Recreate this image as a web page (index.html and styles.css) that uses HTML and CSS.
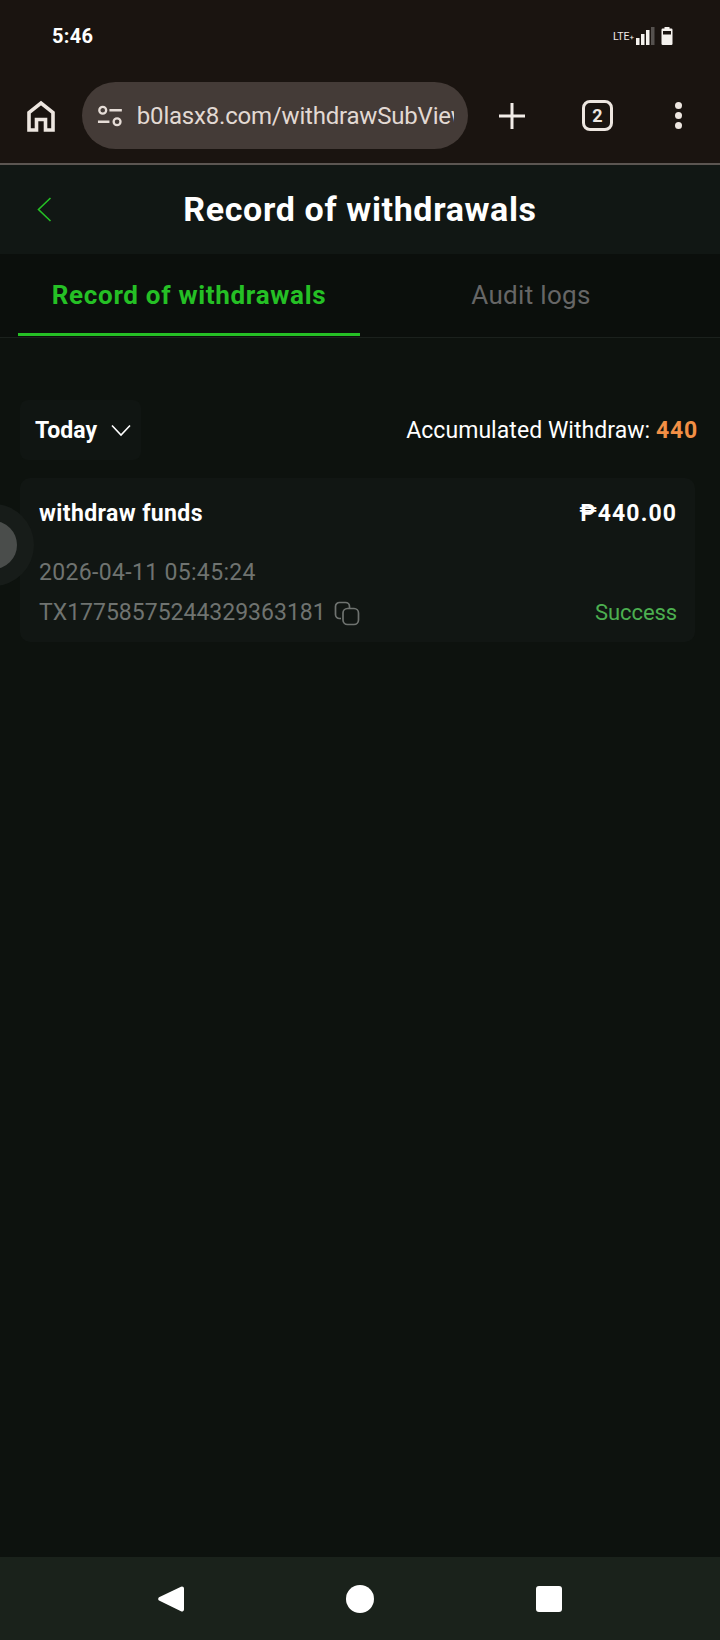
FILE: index.html
```html
<!DOCTYPE html>
<html lang="en">
<head>
    <meta charset="UTF-8">
    <meta name="viewport" content="width=device-width, initial-scale=1.0">
    <title>Record of withdrawals</title>
    <link rel="stylesheet" href="styles.css">
</head>
<body>
    <div class="phone">
        <div class="status-bar">
            <span class="clock">5:46</span>
            <div class="status-icons">
                <span class="lte">LTE<small>+</small></span>
                <svg class="signal" width="20" height="18" viewBox="0 0 20 18">
                    <rect x="0" y="11" width="3.5" height="7" fill="#f5f2ee"/>
                    <rect x="5" y="7" width="3.5" height="11" fill="#f5f2ee"/>
                    <rect x="10" y="3" width="3.5" height="15" fill="#f5f2ee"/>
                    <rect x="15" y="0" width="3.5" height="18" fill="#55514e"/>
                </svg>
                <svg class="battery" width="12" height="18" viewBox="0 0 12 18">
                    <rect x="3.5" y="0" width="5" height="2" fill="#f5f2ee"/>
                    <rect x="0.5" y="1.5" width="11" height="16.5" rx="1.2" fill="#f5f2ee"/>
                    <rect x="2" y="4" width="8" height="3.5" fill="#1a1410"/>
                </svg>
            </div>
        </div>

        <div class="browser-bar">
            <svg class="home-icon" width="30" height="32" viewBox="0 0 30 32" fill="none" stroke="#ede6e0" stroke-width="3.6">
                <path d="M3 30V12.500L15 3l12 9.500V30h-7.500V19.500h-9V30z"/>
            </svg>
            <div class="url-pill">
                <svg width="27" height="22" viewBox="0 0 27 22" fill="none" stroke="#e6ddd7" stroke-width="2.4">
                    <circle cx="6" cy="5" r="3.6"/>
                    <path d="M13 5h13M1 17h12"/>
                    <circle cx="21" cy="17" r="3.6"/>
                </svg>
                <span class="url-text">b0lasx8.com/withdrawSubView</span>
            </div>
            <svg class="plus-icon" width="28" height="28" viewBox="0 0 28 28" stroke="#f2ece7" stroke-width="3">
                <path d="M14 1v26M1 14h26"/>
            </svg>
            <div class="tab-count">2</div>
            <div class="dots"><i></i><i></i><i></i></div>
        </div>

        <div class="page-header">
            <svg class="back-icon" width="15" height="25" viewBox="0 0 15 25" fill="none" stroke="#25c025" stroke-width="1.6">
                <path d="M13.5 1 1.5 12.5 13.5 24"/>
            </svg>
            <h1>Record of withdrawals</h1>
        </div>

        <div class="tabs">
            <div class="tab active">Record of withdrawals</div>
            <div class="tab">Audit logs</div>
        </div>

        <main class="content">
            <div class="filter-row">
                <div class="date-select">
                    <span>Today</span>
                    <svg width="20" height="13" viewBox="0 0 20 13" fill="none" stroke="#fff" stroke-width="1.6">
                        <path d="M1 1.5 10 11l9-9.5"/>
                    </svg>
                </div>
                <div class="total">Accumulated Withdraw: <b>440</b></div>
            </div>

            <div class="record-card">
                <div class="record-top">
                    <span class="record-name">withdraw funds</span>
                    <span class="record-amount">₱440.00</span>
                </div>
                <div class="record-date">2026-04-11 05:45:24</div>
                <div class="record-bottom">
                    <div class="record-id">
                        <span>TX17758575244329363181</span>
                        <svg width="26" height="25" viewBox="0 0 26 25" fill="none" stroke="#6f7370" stroke-width="1.7">
                            <path d="M7 17.5H5.5A4 4 0 0 1 1.5 13.500V5.500a4 4 0 0 1 4-4h6a4 4 0 0 1 4 4V7"/>
                            <rect x="9" y="7.500" width="15.500" height="16" rx="4.500"/>
                        </svg>
                    </div>
                    <span class="record-status">Success</span>
                </div>
            </div>
        </main>

        <div class="float-ball"><i></i></div>

        <div class="nav-bar">
            <svg width="28" height="28" viewBox="0 0 28 28"><path d="M25 1.500a2 2 0 0 1 2 2v21a2 2 0 0 1-3 1.700L2 15.500a2 2 0 0 1 0-3.200L24 1.800z" fill="#fff"/></svg>
            <div class="nav-circle"></div>
            <div class="nav-square"></div>
        </div>
    </div>
</body>
</html>
```

FILE: styles.css
```css
* {
    box-sizing: border-box;
}
body {
    margin: 0;
    padding: 0;
    background-color: #0d120e;
    font-family: Roboto, "Liberation Sans", sans-serif;
}
.phone {
    position: relative;
    width: 720px;
    height: 1640px;
    overflow: hidden;
    display: flex;
    flex-direction: column;
}
.status-bar {
    height: 72px;
    background: #1a1410;
    display: flex;
    justify-content: space-between;
    align-items: center;
    padding: 0 47px 0 52px;
}
.clock {
    color: #fff;
    font-size: 20px;
    font-weight: 700;
    letter-spacing: 0.3px;
}
.status-icons {
    display: flex;
    align-items: center;
}
.lte {
    color: #eeeae6;
    font-size: 10.500px;
    margin-right: 2px;
}
.lte small {
    font-size: 8px;
}
.signal {
    margin-right: 5px;
}
.browser-bar {
    height: 93px;
    background: #1a1410;
    border-bottom: 2px solid #5c5652;
    display: flex;
    align-items: center;
    padding: 0 0 4px 26px;
}
.home-icon {
    flex: none;
}
.url-pill {
    width: 386px;
    height: 67px;
    margin-left: 26px;
    background: #443b37;
    border-radius: 34px;
    display: flex;
    align-items: center;
    padding: 0 14px 0 15px;
    flex: none;
}
.url-text {
    margin-left: 14px;
    color: #e2d9d3;
    font-size: 24px;
    white-space: nowrap;
    overflow: hidden;
    letter-spacing: -0.2px;
}
.plus-icon {
    margin-left: 30px;
    flex: none;
}
.tab-count {
    width: 31px;
    height: 31px;
    margin-left: 56px;
    border: 3px solid #ede6e0;
    border-radius: 8px;
    color: #ede6e0;
    font-size: 18px;
    font-weight: 700;
    display: flex;
    align-items: center;
    justify-content: center;
    flex: none;
}
.dots {
    margin-left: 62px;
    display: flex;
    flex-direction: column;
    gap: 3px;
}
.dots i {
    display: block;
    width: 7px;
    height: 7px;
    border-radius: 50%;
    background: #ede6e0;
}
.page-header {
    height: 89px;
    padding-bottom: 2px;
    background: #111714;
    display: flex;
    align-items: center;
    justify-content: center;
    position: relative;
}
.back-icon {
    position: absolute;
    left: 37px;
    top: 32px;
}
.page-header h1 {
    margin: 0;
    color: #fff;
    font-size: 34px;
    font-weight: 700;
    letter-spacing: 0.64px;
}
.tabs {
    height: 84px;
    background: #0b0f0c;
    border-bottom: 1px solid #1b211d;
    display: flex;
    align-items: flex-start;
    padding: 0 18px;
}
.tab {
    width: 342px;
    height: 82px;
    display: flex;
    align-items: center;
    justify-content: center;
    color: #666;
    font-size: 26px;
    letter-spacing: 0.3px;
}
.tab.active {
    color: #25c025;
    font-weight: 700;
    letter-spacing: 0.7px;
    padding-top: 2px;
    border-bottom: 3px solid #25c025;
}
.content {
    flex: 1;
    padding: 62px 25px 0 20px;
}
.filter-row {
    display: flex;
    justify-content: space-between;
    align-items: center;
    height: 60px;
}
.date-select {
    width: 121px;
    height: 60px;
    background: #101512;
    border-radius: 8px;
    display: flex;
    align-items: center;
    padding-left: 15px;
    gap: 14px;
    color: #fff;
    font-size: 23px;
    font-weight: 700;
}
.total {
    color: #fff;
    font-size: 23px;
    letter-spacing: 0.05px;
    margin-right: -3px;
}
.total b {
    color: #f28f45;
    letter-spacing: 0.8px;
}
.record-card {
    margin-top: 18px;
    height: 164px;
    background: #111613;
    border-radius: 10px;
    padding: 21px 18px 0 19px;
}
.record-top {
    display: flex;
    justify-content: space-between;
    color: #fff;
    font-size: 23px;
    font-weight: 700;
    line-height: 30px;
}
.record-name {
    letter-spacing: 0.4px;
}
.record-amount {
    letter-spacing: 1.1px;
}
.record-date {
    margin-top: 29px;
    color: #6f7370;
    font-size: 23px;
    letter-spacing: 0.33px;
    line-height: 30px;
}
.record-bottom {
    margin-top: 10px;
    display: flex;
    justify-content: space-between;
    align-items: center;
    color: #6f7370;
    font-size: 23px;
    line-height: 30px;
}
.record-id {
    display: flex;
    align-items: center;
    gap: 8px;
}
.record-status {
    color: #4caf50;
    font-size: 22px;
    letter-spacing: -0.1px;
}
.float-ball {
    position: absolute;
    left: -48px;
    top: 504px;
    width: 82px;
    height: 82px;
    border-radius: 50%;
    background: #171c19;
    display: flex;
    align-items: center;
    justify-content: center;
}
.float-ball i {
    display: block;
    width: 48px;
    height: 48px;
    border-radius: 50%;
    background: #4a4d4b;
}
.nav-bar {
    height: 83px;
    background: #1a221b;
    display: flex;
    align-items: center;
    padding: 0 0 0 157px;
}
.nav-circle {
    width: 28px;
    height: 28px;
    margin-left: 161px;
    border-radius: 50%;
    background: #fff;
}
.nav-square {
    width: 26px;
    height: 26px;
    margin-left: 162px;
    border-radius: 3px;
    background: #fff;
}
```
